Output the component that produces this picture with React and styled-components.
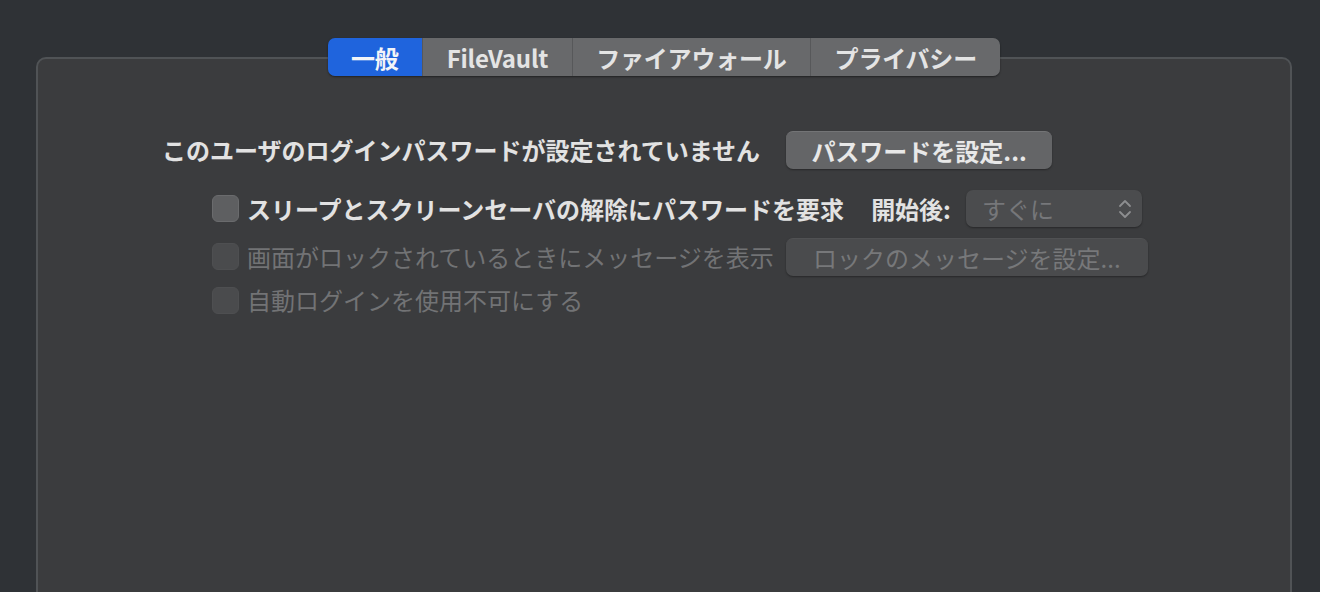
import React from "react";
import styled, { createGlobalStyle } from "styled-components";

const GlobalStyle = createGlobalStyle`
  html, body {
    margin: 0;
    padding: 0;
    background: #2f3236;
    overflow: hidden;
  }
  body {
    font-family: "Noto Sans CJK JP", "Noto Sans", sans-serif;
  }
`;

const tabs = ["一般", "FileVault", "ファイアウォール", "プライバシー"];

const App = () => {
  return (
    <>
      <GlobalStyle />
      <Page>
        <TabBar>
          {tabs.map((t, i) => (
            <Tab key={t} active={i === 0}>
              {t}
            </Tab>
          ))}
        </TabBar>
        <Panel>
          <TopRow>
            <Label>このユーザのログインパスワードが設定されていません</Label>
            <Button width={266}>パスワードを設定...</Button>
          </TopRow>

          <CheckRow>
            <Box />
            <Label>スリープとスクリーンセーバの解除にパスワードを要求</Label>
            <Caption>開始後:</Caption>
            <Popup>
              <span>すぐに</span>
              <svg width="14" height="24" viewBox="0 0 14 24">
                <path
                  d="M2 9 L7 4 L12 9 M2 15 L7 20 L12 15"
                  fill="none"
                  stroke="#8d8e90"
                  strokeWidth="1.8"
                  strokeLinecap="round"
                  strokeLinejoin="round"
                />
              </svg>
            </Popup>
          </CheckRow>

          <CheckRow gap={11}>
            <Box disabled />
            <Label disabled>画面がロックされているときにメッセージを表示</Label>
            <Button width={362} disabled>
              ロックのメッセージを設定...
            </Button>
          </CheckRow>

          <CheckRow gap={10} short>
            <Box disabled />
            <Label disabled>自動ログインを使用不可にする</Label>
          </CheckRow>
        </Panel>
      </Page>
    </>
  );
};

export default App;

const Page = styled.div`
  width: 1320px;
  height: 592px;
  box-sizing: border-box;
  padding: 38px 28px 0 36px;
  display: flex;
  flex-direction: column;
  align-items: center;
  overflow: hidden;
`;

const TabBar = styled.div`
  position: relative;
  z-index: 2;
  flex-shrink: 0;
  display: flex;
  height: 38px;
  margin-bottom: -19px;
  border-radius: 7px;
  overflow: hidden;
  box-shadow: 0 1px 2px rgba(0, 0, 0, 0.45);
`;

const Tab = styled.div`
  display: flex;
  align-items: center;
  justify-content: center;
  padding: 0 23.5px;
  font-size: 24px;
  font-weight: 600;
  color: ${p => (p.active ? "#f2f4f8" : "#e4e4e4")};
  background: ${p => (p.active ? "#1f64dd" : "#68696b")};
  border-left: ${p => (p.active ? "none" : "1px solid #57585a")};
  letter-spacing: -0.2px;
`;

const Panel = styled.div`
  align-self: stretch;
  flex-shrink: 0;
  height: 600px;
  box-sizing: border-box;
  background: #3b3c3e;
  border: 2px solid #505356;
  border-radius: 10px;
  padding: 72px 0 0 124px;
  display: flex;
  flex-direction: column;
`;

const TopRow = styled.div`
  display: flex;
  align-items: center;
  height: 38px;
  gap: 26px;
`;

const CheckRow = styled.div`
  display: flex;
  align-items: center;
  height: ${p => (p.short ? "30px" : "37px")};
  margin-top: ${p => p.gap || 21}px;
  margin-left: 50px;
  gap: 12px;
`;

const Label = styled.span`
  font-size: 24px;
  font-weight: ${p => (p.disabled ? 400 : 600)};
  color: ${p => (p.disabled ? "#727375" : "#e2e2e2")};
  white-space: nowrap;
  line-height: 1;
`;

const Box = styled.div`
  width: 27px;
  height: 27px;
  box-sizing: border-box;
  border-radius: 6px;
  background: ${p => (p.disabled ? "#4a4b4d" : "#5e5f61")};
  border: 1px solid ${p => (p.disabled ? "#4e4f51" : "#6a6b6d")};
  margin-right: -4px;
  flex-shrink: 0;
`;

const Caption = styled.span`
  font-size: 24px;
  font-weight: 600;
  color: #e2e2e2;
  margin-left: 15px;
  margin-right: 3px;
  line-height: 1;
`;

const Button = styled.div`
  width: ${p => p.width}px;
  height: 38px;
  box-sizing: border-box;
  display: flex;
  align-items: center;
  justify-content: center;
  border-radius: 7px;
  font-size: 24px;
  font-weight: ${p => (p.disabled ? 400 : 600)};
  color: ${p => (p.disabled ? "#77787a" : "#e8e8e8")};
  background: ${p => (p.disabled ? "#4a4b4d" : "#646567")};
  border-top: 1px solid ${p => (p.disabled ? "#505153" : "#737476")};
  box-shadow: 0 1px 2px rgba(0, 0, 0, 0.35);
  white-space: nowrap;
`;

const Popup = styled.div`
  width: 176px;
  height: 37px;
  box-sizing: border-box;
  display: flex;
  align-items: center;
  justify-content: space-between;
  padding: 0 10px 0 16px;
  border-radius: 7px;
  background: #4b4c4e;
  box-shadow: 0 1px 2px rgba(0, 0, 0, 0.35);
  font-size: 24px;
  color: #76777a;
`;
